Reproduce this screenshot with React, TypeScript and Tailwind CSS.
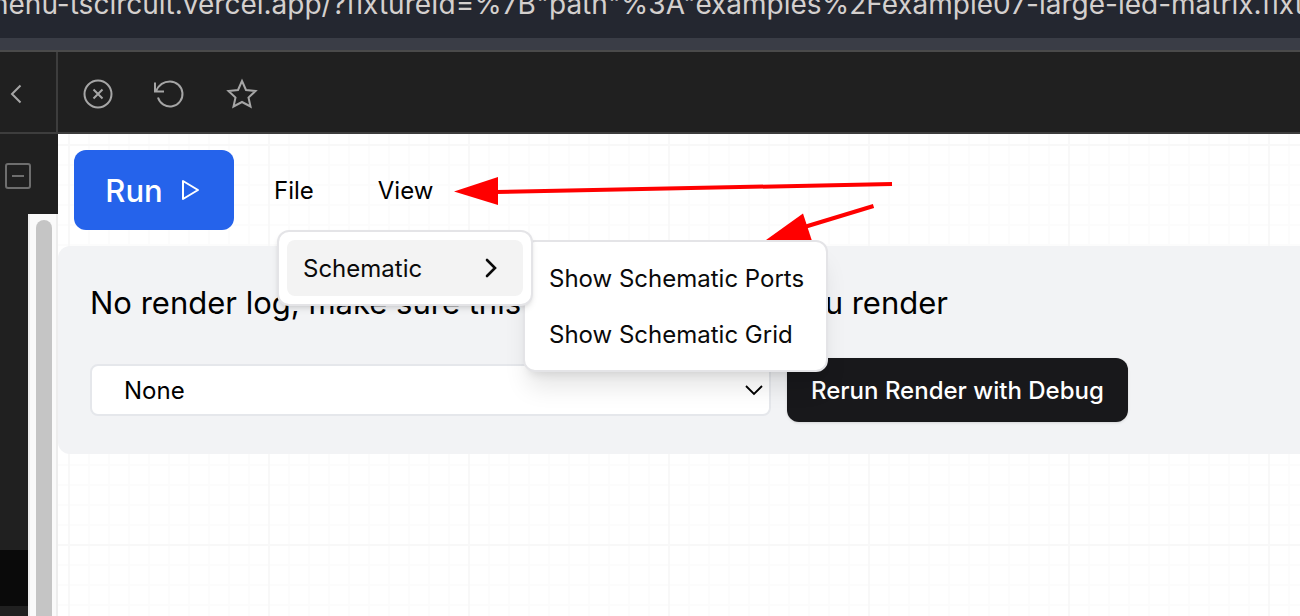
import React from "react";

const address =
  'menu-tscircuit.vercel.app/?fixtureId=%7B"path"%3A"examples%2Fexample07-large-led-matrix.fixture.tsx"%7D';

function AddressBar() {
  return (
    <header className="shrink-0">
      <div className="h-[38px] bg-[#242730] overflow-hidden">
        <p className="-ml-4 -mt-3 text-[28px] leading-[32px] text-[#d4d0ce] whitespace-nowrap">{address}</p>
      </div>
      <div className="h-[14px] bg-[#3a3d46] border-b-2 border-[#4a4a4a]" />
    </header>
  );
}

function Sidebar() {
  return (
    <aside className="w-[58px] shrink-0 bg-[#202020] flex flex-col">
      <div className="h-[82px] shrink-0 border-r-2 border-b-2 border-[#3d3d3d] flex items-center pl-2 pt-1">
        <button aria-label="Back" className="text-[#a6a6a6]">
          <svg width="16" height="22" viewBox="0 0 16 22" fill="none" stroke="currentColor" strokeWidth="2">
            <path d="M12.5 2.5 4 11l8.5 8.5" />
          </svg>
        </button>
      </div>
      <div className="h-20 shrink-0 pt-[28px] pl-1">
        <button aria-label="Collapse" className="block text-[#6e6e6e]">
          <svg width="28" height="28" viewBox="0 0 28 28" fill="none" stroke="currentColor" strokeWidth="2">
            <rect x="2" y="2" width="24" height="24" rx="2" />
            <path d="M8 14h12" />
          </svg>
        </button>
      </div>
      {/* Tree and its scroll track */}
      <div className="flex-1 flex min-h-0">
        <div className="flex-1 flex flex-col justify-end pb-[10px]">
          <div className="h-14 bg-[#0a0a0a]" />
        </div>
        <div className="w-[30px] bg-[#fafafa] border-x-2 border-[#ededed] pt-[6px] pl-[6px]">
          <div className="w-4 h-full bg-[#c5c5c5] rounded-t-full" />
        </div>
      </div>
    </aside>
  );
}

function Toolbar() {
  return (
    <div className="h-[82px] shrink-0 bg-[#202020] border-b-2 border-[#3d3d3d] flex items-center gap-10 pl-6 pt-1 text-[#a6a6a6]">
      <button aria-label="Close">
        <svg width="32" height="32" viewBox="0 0 32 32" fill="none" stroke="currentColor" strokeWidth="2">
          <circle cx="16" cy="16" r="13.5" />
          <path d="m11.5 11.5 9 9m0-9-9 9" />
        </svg>
      </button>
      <button aria-label="Reload">
        <svg width="32" height="32" viewBox="0 0 32 32" fill="none" stroke="currentColor" strokeWidth="2">
          <path d="M1 4.5v9h9M2 13C5 6.500 10 3.500 16 3.500a12.500 12.500 0 1 1-12 16" />
        </svg>
      </button>
      <button aria-label="Favorite">
        <svg width="32" height="32" viewBox="0 0 32 32" fill="none" stroke="currentColor" strokeWidth="2">
          <path d="m16 3 4 9 9.500 1-7 6.500 2 9-8.500-4.500-8.500 4.500 2-9-7-6.500 9.500-1z" />
        </svg>
      </button>
    </div>
  );
}

function ViewMenu() {
  return (
    <div className="absolute left-[219px] top-24 z-20 text-2xl text-[#0a0a0a]">
      <div role="menu" className="relative z-10 w-64 p-2 bg-white border-2 border-[#e4e4e7] rounded-xl shadow-md">
        <button role="menuitem" className="w-full h-14 px-4 pt-0.5 flex items-center justify-between bg-[#f3f3f3] rounded-lg">
          Schematic
          <svg width="32" height="32" viewBox="0 0 32 32" fill="none" stroke="currentColor" strokeWidth="2.6" strokeLinecap="round">
            <path d="m12 7 8 8-8 8" />
          </svg>
        </button>
      </div>
      <div role="menu" className="absolute left-[246px] top-[10px] w-[305px] p-2 bg-white border-2 border-[#e4e4e7] rounded-xl shadow-xl">
        <button role="menuitem" className="w-full h-14 px-4 pt-0.5 text-left whitespace-nowrap">Show Schematic Ports</button>
        <button role="menuitem" className="w-full h-14 px-4 pt-0.5 text-left whitespace-nowrap">Show Schematic Grid</button>
      </div>
    </div>
  );
}

function Arrows() {
  return (
    <svg className="absolute left-[390px] top-[36px] z-10 pointer-events-none" width="450" height="72" viewBox="448 170 450 72" fill="red" stroke="none">
      <path d="M454 191.500 498 177v28z" />
      <path d="M496 192 892 184" stroke="red" strokeWidth="4" />
      <path d="M766 240 803 213.500 812 241z" />
      <path d="M806 226.500 873.500 206" stroke="red" strokeWidth="4" />
    </svg>
  );
}

function RenderLog() {
  return (
    <section className="bg-[#f2f3f5] rounded-l-xl p-8">
      <p className="pt-0.5 text-[31px] leading-[46px] text-black">No render log, make sure this tab is open when you render</p>
      <div className="mt-8 flex items-center gap-4">
        <div className="relative w-[681px]">
          <select aria-label="Debug output" className="block w-full h-[52px] pl-8 pt-0.5 appearance-none bg-white border-2 border-gray-200 rounded-lg text-2xl text-black">
            <option>None</option>
          </select>
          <svg className="absolute right-2 top-[18px] pointer-events-none" width="18" height="16" viewBox="0 0 18 16" fill="none" stroke="black" strokeWidth="1.8">
            <path d="m1 4 8 8 8-8" />
          </svg>
        </div>
        <button className="h-16 px-6 pt-0.5 bg-[#18181b] text-white text-2xl font-medium rounded-xl shadow whitespace-nowrap">
          Rerun Render with Debug
        </button>
      </div>
    </section>
  );
}

export default function App() {
  return (
    <div className="h-screen flex flex-col overflow-hidden bg-white font-['Inter',sans-serif]">
      <AddressBar />
      <div className="flex-1 min-h-0 flex">
        <Sidebar />
        <div className="flex-1 min-w-0 flex flex-col">
          <Toolbar />
          <main className="relative flex-1 bg-[linear-gradient(#f8f8f8_2px,transparent_2px),linear-gradient(90deg,#f8f8f8_2px,transparent_2px),linear-gradient(#fcfcfc_2px,transparent_2px),linear-gradient(90deg,#fcfcfc_2px,transparent_2px)] bg-[size:200px_200px,200px_200px,20px_20px,20px_20px] bg-[position:10px_10px]">
            <div className="p-4 flex items-center">
              <button className="h-20 w-40 pt-0.5 flex items-center justify-center gap-4 bg-[#2563eb] text-white text-[31px] font-medium rounded-xl">
                Run
                <svg width="24" height="24" viewBox="0 0 24 24" fill="none" stroke="currentColor" strokeWidth="2" strokeLinejoin="round">
                  <path d="M4 2v18l15-9z" />
                </svg>
              </button>
              <nav className="flex pl-10 pt-0.5 gap-16 text-2xl text-black">
                <button>File</button>
                <button>View</button>
              </nav>
            </div>
            <RenderLog />
            <ViewMenu />
            <Arrows />
          </main>
        </div>
      </div>
    </div>
  );
}
